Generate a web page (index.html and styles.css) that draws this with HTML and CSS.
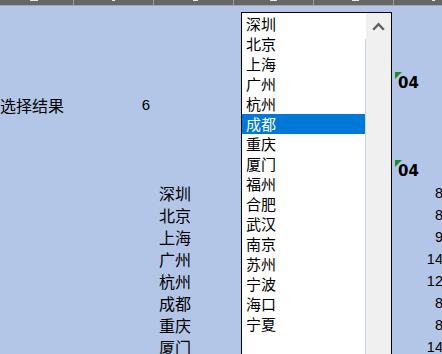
FILE: index.html
```html
<!DOCTYPE html>
<html lang="zh">
<head>
<meta charset="utf-8">
<link rel="stylesheet" href="styles.css">
</head>
<body>
<div class="colbar">
  <div class="colhead c0"><span class="mark m1"></span></div>
  <div class="colhead"><span class="mark m2"></span></div>
  <div class="colhead"><span class="mark m3"></span></div>
  <div class="colhead"><span class="mark m4"></span></div>
  <div class="colhead"><span class="mark m5"></span></div>
  <div class="colhead"><span class="mark m6"></span></div>
</div>
<div class="sheet">
  <div class="cell flag r4 cF">04</div>
  <div class="cell label r5 cA">选择结果</div>
  <div class="cell num r5 cB">6</div>
  <div class="cell flag r8 cF">04</div>

  <div class="cell city r9 cC">深圳</div><div class="cell val r9 cF">8</div>
  <div class="cell city r10 cC">北京</div><div class="cell val r10 cF">8</div>
  <div class="cell city r11 cC">上海</div><div class="cell val r11 cF">9</div>
  <div class="cell city r12 cC">广州</div><div class="cell val r12 cF">14</div>
  <div class="cell city r13 cC">杭州</div><div class="cell val r13 cF">12</div>
  <div class="cell city r14 cC">成都</div><div class="cell val r14 cF">8</div>
  <div class="cell city r15 cC">重庆</div><div class="cell val r15 cF">8</div>
  <div class="cell city r16 cC">厦门</div><div class="cell val r16 cF">14</div>
</div>

<div class="listbox">
  <ul class="items">
    <li>深圳</li>
    <li>北京</li>
    <li>上海</li>
    <li>广州</li>
    <li>杭州</li>
    <li class="sel">成都</li>
    <li>重庆</li>
    <li>厦门</li>
    <li>福州</li>
    <li>合肥</li>
    <li>武汉</li>
    <li>南京</li>
    <li>苏州</li>
    <li>宁波</li>
    <li>海口</li>
    <li>宁夏</li>
  </ul>
  <div class="scroll">
    <div class="arrow">
      <svg width="13" height="9" viewBox="0 0 13 9"><path d="M1.2 7.8 L6.5 2.2 L11.8 7.8" fill="none" stroke="#606060" stroke-width="2.4"/></svg>
    </div>
    <div class="track"></div>
  </div>
</div>
</body>
</html>
```

FILE: styles.css
```css
html, body {
  margin: 0;
  padding: 0;
}
body {
  width: 442px;
  height: 354px;
  overflow: hidden;
  background: #b4c6e7;
  position: relative;
  font-family: "Noto Sans CJK SC", sans-serif;
  color: #000;
}
.colbar {
  display: grid;
  grid-template-columns: 74px 80px 80px 80px 80px 80px;
  height: 5px;
  background: #666666;
  border-bottom: 1px solid #a6a6a6;
}
.colhead {
  position: relative;
  border-right: 1px solid #9c9c9c;
  box-sizing: border-box;
}
.mark {
  position: absolute;
  top: 0;
  height: 1px;
  background: #e8e8e8;
}
.m1 { left: 30px; width: 8px; }
.m2 { left: 38px; width: 3px; }
.m3 { left: 39px; width: 5px; }
.m4 { left: 36px; width: 7px; }
.m5 { left: 38px; width: 7px; }
.m6 { left: 38px; width: 3px; }
.sheet {
  display: grid;
  grid-template-columns: 74px 80px 80px 80px 80px 80px;
  grid-auto-rows: 22px;
  width: 474px;
}
.cell {
  line-height: 22px;
  white-space: nowrap;
  position: relative;
}
.cA { grid-column: 1; }
.cB { grid-column: 2; }
.cC { grid-column: 3; }
.cF { grid-column: 6; }
.r4 { grid-row: 4; }
.r5 { grid-row: 5; }
.r8 { grid-row: 8; }
.r9 { grid-row: 9; }
.r10 { grid-row: 10; }
.r11 { grid-row: 11; }
.r12 { grid-row: 12; }
.r13 { grid-row: 13; }
.r14 { grid-row: 14; }
.r15 { grid-row: 15; }
.r16 { grid-row: 16; }
.label {
  font-size: 16px;
}
.city {
  font-size: 16px;
  padding-left: 5px;
}
.num {
  font-family: "Liberation Sans", sans-serif;
  font-size: 15px;
  text-align: right;
  padding-right: 4px;
}
.val {
  font-family: "Liberation Sans", sans-serif;
  font-size: 14.5px;
  text-align: right;
  padding-right: 31px;
}
.flag {
  font-family: "DejaVu Sans", sans-serif;
  font-weight: bold;
  font-size: 15px;
  padding-left: 4px;
}
.flag::before {
  content: "";
  position: absolute;
  top: 0;
  left: 1px;
  width: 0;
  height: 0;
  border-top: 7px solid #1f8a2a;
  border-right: 7px solid transparent;
}
.listbox {
  position: absolute;
  left: 241px;
  top: 12px;
  width: 149px;
  height: 360px;
  border: 1px solid #000;
  background: #fff;
  display: flex;
}
.items {
  list-style: none;
  margin: 0;
  padding: 1px 0 0 0;
  width: 124px;
  font-size: 15px;
}
.items li {
  height: 20px;
  line-height: 20px;
  padding-left: 4px;
}
.items li.sel {
  background: #0078d7;
  color: #fff;
}
.scroll {
  width: 25px;
  background: #f0f0f0;
  display: flex;
  flex-direction: column;
}
.arrow {
  height: 26px;
  display: flex;
  align-items: center;
  justify-content: center;
}
.track {
  flex: 1;
  border-left: 1px solid #c6d4ea;
  margin-left: -1px;
}
```
